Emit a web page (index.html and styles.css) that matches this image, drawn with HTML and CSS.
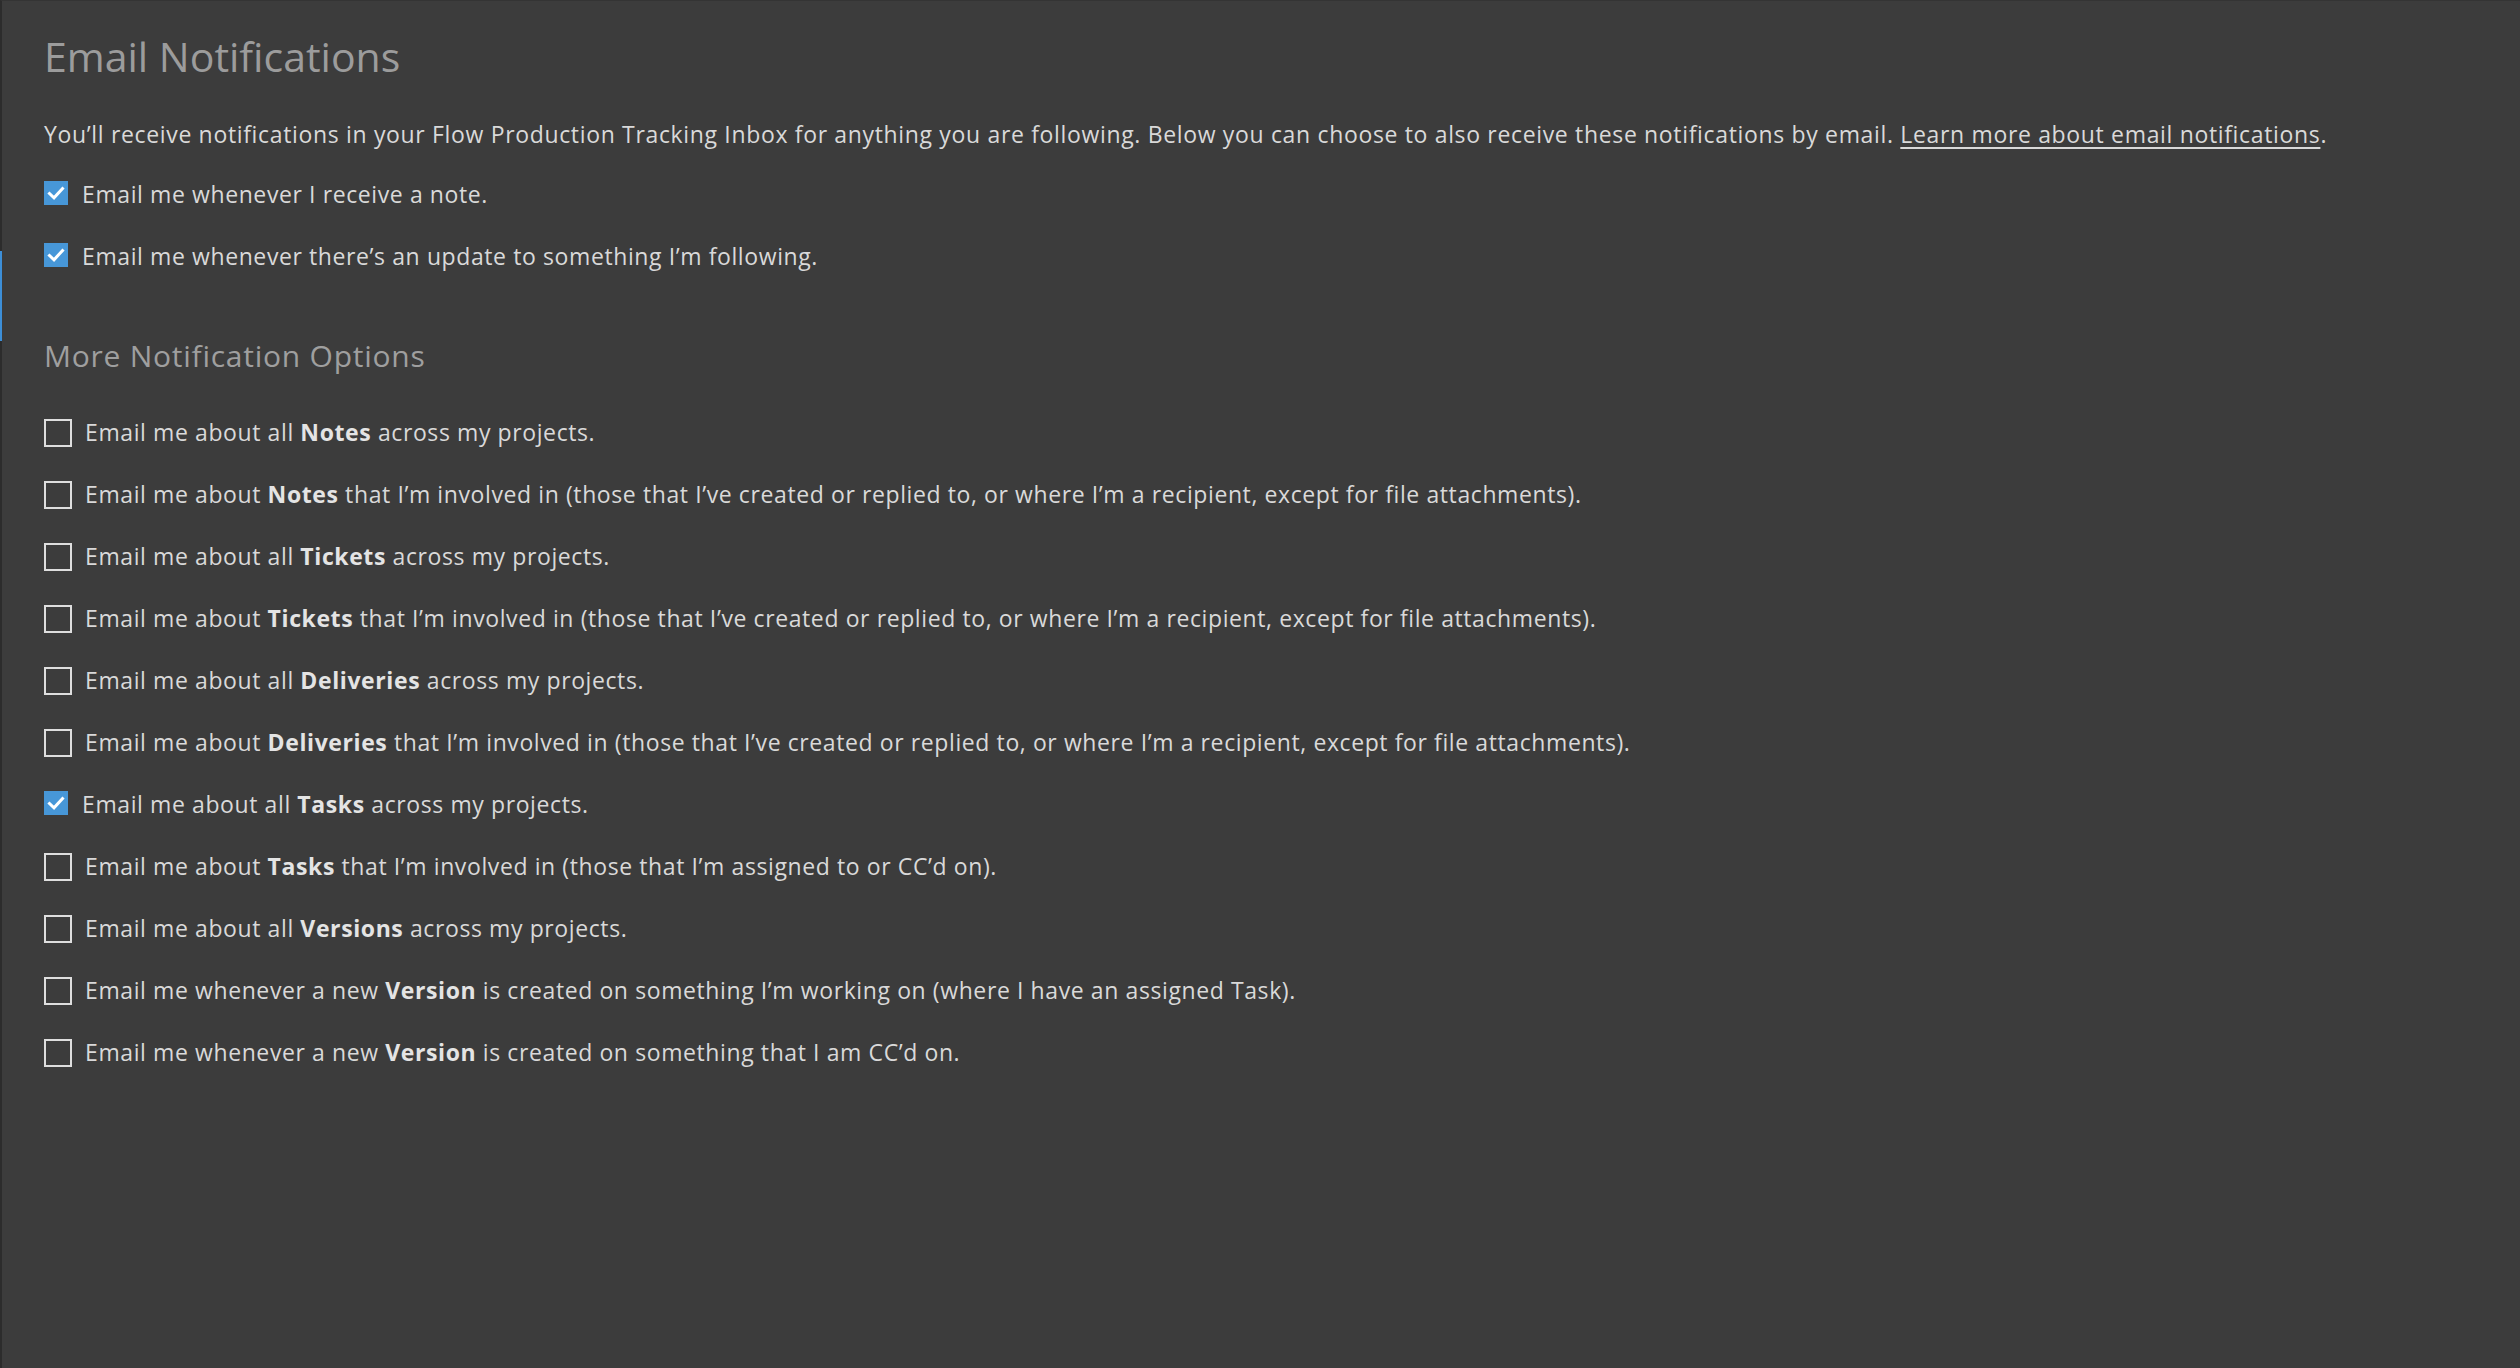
FILE: index.html
```html
<!DOCTYPE html>
<html lang="en">
<head>
<meta charset="utf-8">
<title>Email Notifications</title>
<link rel="stylesheet" href="styles.css">
</head>
<body>
<div class="page">
  <div class="accent"></div>
  <main class="content">
    <h1 class="title">Email Notifications</h1>
    <p class="intro">You’ll receive notifications in your Flow Production Tracking Inbox for anything you are following. Below you can choose to also receive these notifications by email. <a class="link" href="#">Learn more about email notifications</a>.</p>
    <ul class="options options-main">
      <li class="option"><span class="box checked"><svg viewBox="0 0 24 24" width="24" height="24"><path d="M5.5 12.5 L10 16.8 L18.5 7.5" fill="none" stroke="#fff" stroke-width="3" stroke-linecap="square"/></svg></span><span class="label">Email me whenever I receive a note.</span></li>
      <li class="option"><span class="box checked"><svg viewBox="0 0 24 24" width="24" height="24"><path d="M5.5 12.5 L10 16.8 L18.5 7.5" fill="none" stroke="#fff" stroke-width="3" stroke-linecap="square"/></svg></span><span class="label">Email me whenever there’s an update to something I’m following.</span></li>
    </ul>
    <h2 class="subtitle">More Notification Options</h2>
    <ul class="options options-more">
      <li class="option"><span class="box"></span><span class="label">Email me about all <b>Notes</b> across my projects.</span></li>
      <li class="option"><span class="box"></span><span class="label">Email me about <b>Notes</b> that I’m involved in (those that I’ve created or replied to, or where I’m a recipient, except for file attachments).</span></li>
      <li class="option"><span class="box"></span><span class="label">Email me about all <b>Tickets</b> across my projects.</span></li>
      <li class="option"><span class="box"></span><span class="label">Email me about <b>Tickets</b> that I’m involved in (those that I’ve created or replied to, or where I’m a recipient, except for file attachments).</span></li>
      <li class="option"><span class="box"></span><span class="label">Email me about all <b>Deliveries</b> across my projects.</span></li>
      <li class="option"><span class="box"></span><span class="label">Email me about <b>Deliveries</b> that I’m involved in (those that I’ve created or replied to, or where I’m a recipient, except for file attachments).</span></li>
      <li class="option"><span class="box checked"><svg viewBox="0 0 24 24" width="24" height="24"><path d="M5.5 12.5 L10 16.8 L18.5 7.5" fill="none" stroke="#fff" stroke-width="3" stroke-linecap="square"/></svg></span><span class="label">Email me about all <b>Tasks</b> across my projects.</span></li>
      <li class="option"><span class="box"></span><span class="label">Email me about <b>Tasks</b> that I’m involved in (those that I’m assigned to or CC’d on).</span></li>
      <li class="option"><span class="box"></span><span class="label">Email me about all <b>Versions</b> across my projects.</span></li>
      <li class="option"><span class="box"></span><span class="label">Email me whenever a new <b>Version</b> is created on something I’m working on (where I have an assigned Task).</span></li>
      <li class="option"><span class="box"></span><span class="label">Email me whenever a new <b>Version</b> is created on something that I am CC’d on.</span></li>
    </ul>
  </main>
</div>
</body>
</html>
```

FILE: styles.css
```css
html, body {
  margin: 0;
  padding: 0;
  height: 100%;
}
body {
  background: #3c3c3c;
  font-family: "Open Sans", "Noto Sans", sans-serif;
  color: #d9d9d9;
}
.page {
  position: relative;
  min-height: 100%;
  box-sizing: border-box;
  border-left: 2px solid #2c2c2c;
  border-top: 1px solid #343434;
}
.accent {
  position: absolute;
  left: -2px;
  top: 250px;
  width: 2px;
  height: 90px;
  background: #3d8fd8;
}
.content {
  padding: 30px 42px 0 42px;
}
.title {
  margin: 0;
  font-size: 41px;
  line-height: 50px;
  font-weight: 400;
  color: #9c9c9c;
}
.intro {
  margin: 35px 0 0 0;
  font-size: 23px;
  line-height: 36px;
  letter-spacing: 0.66px;
}
.link {
  color: #d9d9d9;
  text-decoration: underline;
  text-decoration-thickness: 2px;
  text-underline-offset: 4px;
}
.options {
  list-style: none;
  margin: 0;
  padding: 0;
  display: flex;
  flex-direction: column;
  gap: 26px;
}
.options-main {
  margin-top: 24px;
}
.options-more {
  margin-top: 38px;
}
.subtitle {
  margin: 62px 0 0 0;
  font-size: 30px;
  line-height: 40px;
  font-weight: 400;
  letter-spacing: 0.75px;
  color: #9f9f9f;
}
.option {
  display: flex;
  align-items: flex-start;
  font-size: 23px;
  line-height: 36px;
  letter-spacing: 0.6px;
}
.box {
  flex: none;
  box-sizing: border-box;
  width: 28px;
  height: 28px;
  margin-top: 5px;
  margin-right: 13px;
  border: 2px solid #dedede;
}
.box.checked {
  width: 24px;
  height: 24px;
  margin-right: 14px;
  border: none;
  background: #4797d8;
}
.box svg {
  display: block;
}
.label b {
  font-weight: 700;
  color: #e4e4e4;
}
```
